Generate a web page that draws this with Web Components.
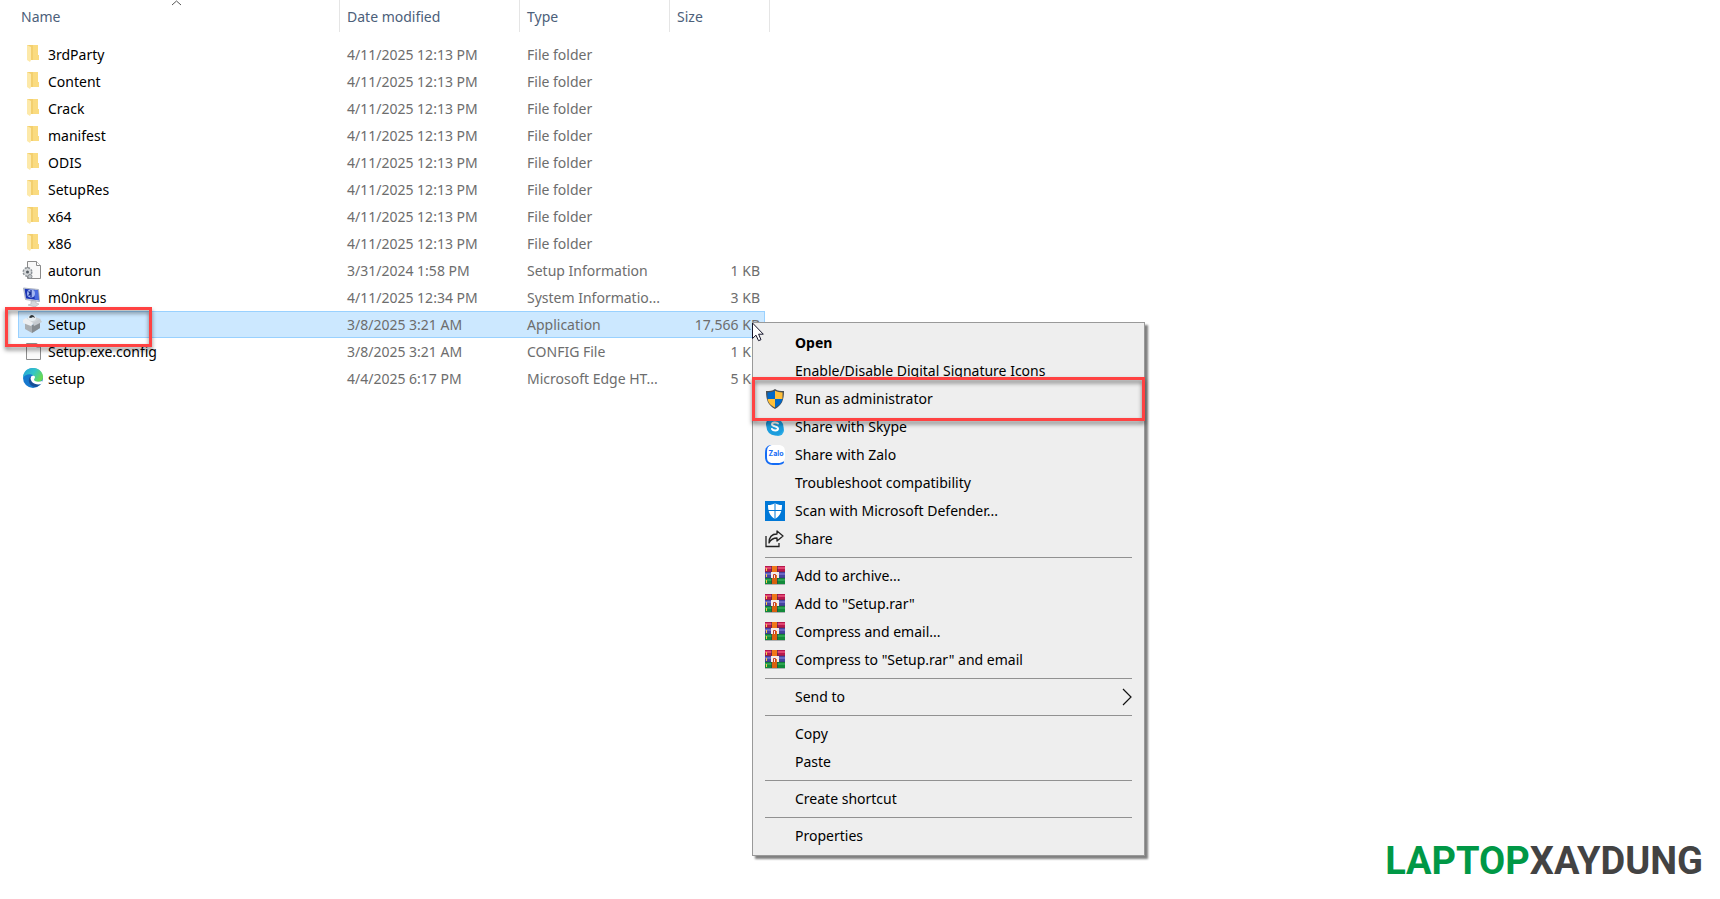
<!DOCTYPE html>
<html lang="en">
<head>
<meta charset="utf-8">
<title>Setup files</title>
<style>
  html { background: #fff; }
  body { margin: 0; font: 14px/20px "Noto Sans", "Open Sans", sans-serif; color: #000; }
</style>
</head>
<body>
<explorer-window>
  <file-list></file-list>
  <mark-box slot="overlay"></mark-box>
  <context-menu slot="overlay">
    <menu-item bold>Open</menu-item>
    <menu-item>Enable/Disable Digital Signature Icons</menu-item>
    <menu-item icon="uac" marked>Run as administrator</menu-item>
    <menu-item icon="skype">Share with Skype</menu-item>
    <menu-item icon="zalo">Share with Zalo</menu-item>
    <menu-item>Troubleshoot compatibility</menu-item>
    <menu-item icon="defender">Scan with Microsoft Defender...</menu-item>
    <menu-item icon="share">Share</menu-item>
    <menu-line></menu-line>
    <menu-item icon="rar">Add to archive...</menu-item>
    <menu-item icon="rar">Add to "Setup.rar"</menu-item>
    <menu-item icon="rar">Compress and email...</menu-item>
    <menu-item icon="rar">Compress to "Setup.rar" and email</menu-item>
    <menu-line></menu-line>
    <menu-item submenu>Send to</menu-item>
    <menu-line></menu-line>
    <menu-item>Copy</menu-item>
    <menu-item>Paste</menu-item>
    <menu-line></menu-line>
    <menu-item>Create shortcut</menu-item>
    <menu-line></menu-line>
    <menu-item>Properties</menu-item>
  </context-menu>
  <mouse-cursor slot="overlay"></mouse-cursor>
  <brand-logo slot="footer"><span slot="first">LAPTOP</span><span slot="second">XAYDUNG</span></brand-logo>
</explorer-window>

<script>
const ICONS = {
  folder: `<path d="M5 1h11v10h1v5H5z" fill="#f3cf6e"/><path d="M11 1h5v10h1v5h-6z" fill="#fadb80"/><path d="M5 1l4 2v13l-1 2-3-2z" fill="#fde9a9"/>`,
  inf: `<path d="M5.500 1.500h9l4 4v13h-13z" fill="#f8f8f8" stroke="#8a8a8a"/><path d="M14.500 1.500v4h4" fill="#fff" stroke="#8a8a8a"/><circle cx="5.500" cy="12" r="4" fill="#d5d8da" stroke="#8b9196" stroke-width="2" stroke-dasharray="2 1.140"/><circle cx="5.500" cy="12" r="3.500" fill="#d5d8da"/><circle cx="5.500" cy="12" r="1.500" fill="#555c62"/><circle cx="8" cy="16.500" r="2" fill="#c3c7ca" stroke="#8a8f93"/>`,
  system: `<path d="M1.500 1l15 1.500 1 12-14-2z" fill="#dfe4ea" stroke="#aab1bf"/><path d="M2.500 1.800l13.500 1.400.8 10L4 11.500z" fill="#1b35b5"/><path d="M12 2.800l4 .4.8 10-4-.6z" fill="#4a6ce0"/><ellipse cx="9" cy="6.500" rx="4" ry="4" fill="#a4b8f2"/><path d="M9 3v7M6.500 4.500c2 1 2 3 0 4" stroke="#172e91" fill="none" stroke-width="1.300"/><path d="M9 14h5v2l3 1-4 3-7-2 3-1z" fill="#d5d8dc" stroke="#aeb3b8" stroke-width=".6"/>`,
  setup: `<path d="M3 8l8 4 7-4v6l-8 5-7-4z" fill="#a9aeb2"/><path d="M10 11l8-4v7l-8 5z" fill="#868c91"/><path d="M3 6l7-4 9 3-8 5z" fill="#cfd4d8"/><path d="M1 6l3-2 7 5-2 3-8-3z" fill="#eceef0"/><path d="M11 9l7-4 2 3-8 4z" fill="#c6cbd0"/><ellipse cx="10" cy="4" rx="4" ry="3" fill="#e8eef2"/><path d="M7 3.500C8 0 12 0 13 4l-2-1-2 1z" fill="#333b40"/>`,
  config: `<path d="M4.500 2.500h10l4 3v13h-14z" fill="#fafafa" stroke="#8d8d8d"/><path d="M14.500 2.500v3.500h4" fill="none" stroke="#8d8d8d"/>`,
  edge: `<defs><linearGradient id="g" x1="0" y1="0" x2="1" y2=".5"><stop stop-color="#249fd9"/><stop offset=".55" stop-color="#32c5c8"/><stop offset="1" stop-color="#68da55"/></linearGradient></defs><circle cx="11" cy="10" r="10" fill="#1678ce"/><path d="M1 10C1 4 5 0 11 0s10 4 10 9c0 4-3 5-6 5-4 0-4-2-3-4 1-4-8-6-11 0z" fill="url(#g)"/><path d="M8 9c-3 4 0 10 6 10 3-1 5-3 5-4-6 2-10 0-9-6z" fill="#154f98"/><path d="M9 9c1-2 4-1 4 0 0 1-1 2-1 3 1 2 5 2 8 1l1 1-2 2c-3 1-7 0-9-2-1-2-2-3-1-5z" fill="#fff"/>`,
  uac: `<path d="M10 0c3 2 5 2 9 2 0 9-2 14-9 18C3 16 1 11 1 2c4 0 6 0 9-2z" fill="#4b5054"/><path d="M10 1.800V10H2.600L2.400 3.400c3 0 5-.2 7.600-1.600z" fill="#0068c8"/><path d="M10 1.800V10h7.400l.2-6.600c-3 0-5-.2-7.600-1.600z" fill="#ffbf38"/><path d="M2.600 10H10v8.400c-4.500-2-6.600-4.400-7.400-8.400z" fill="#ffbf38"/><path d="M17.400 10H10v8.400c4.500-2 6.600-4.400 7.400-8.400z" fill="#0068c8"/>`,
  skype: `<circle cx="7" cy="7" r="6" fill="#1789cf"/><circle cx="13" cy="13" r="6" fill="#29a9e5"/><circle cx="10" cy="10" r="8.500" fill="#1c9ddd"/><path d="M13 6.500c-1-1.500-6-1.700-6 .8s6 1.700 6 4.300-5 2.300-6 .4" fill="none" stroke="#fff" stroke-width="2" stroke-linecap="round"/>`,
  zalo: `<path d="M7 0C2 0 0 3 0 8v4c0 5 3 8 8 8h4c4 0 7-1 7-3z" fill="#146cf5"/><path d="M8 0h5c5 0 7 2 7 7v4c0 5-2 7-7 7H9c-2 0-4 0-5-1-2-1-2-4-2-6V7c0-5 2-7 6-7z" fill="#fff"/><text x="11" y="11" font-size="7" font-weight="700" text-anchor="middle" fill="#146cf5">Zalo</text>`,
  defender: `<path fill="#0078d7" d="M0 0h20v20H0z"/><path d="M10 2c2 1.500 4 2 7 2 0 7-2 11-7 14C5 15 3 11 3 4c3 0 5-.5 7-2z" fill="#fff"/><path d="M10 2v16M3 9.500h14" stroke="#0078d7"/>`,
  share: `<path d="M1 7v10.500h13V14" fill="none" stroke="#222" stroke-width="1.300"/><path d="M12 2l6 5-6 5V9c-4 0-6 1-8 5 0-6 3-9 8-9z" fill="none" stroke="#222" stroke-width="1.300" stroke-linejoin="round"/>`,
  rar: `<path fill="#aeb1b3" d="M0 18h20v1H0z"/><path fill="#b8184c" d="M0 0h20v6H0z"/><path fill="#e04572" d="M0 1h20v2H0z"/><path fill="#4444a0" d="M0 6h20v6H0z"/><path fill="#6a68c4" d="M0 7h20v2H0z"/><path fill="#128a3a" d="M0 12h20v6H0z"/><path fill="#2da350" d="M0 13h20v2H0z"/><path fill="#253046" opacity=".5" d="M0 5.500h20v.6H0zM0 11.600h20v.6H0zM6 0h1v18H6zM12 0h1v18h-1z"/><path fill="#f07818" d="M7 0h5v12H7z"/><path fill="#d9600f" d="M7 12h5v6H7z"/><path fill="#f4ece8" d="M6 6h8v6h-2V9h-1v3H9V9H8v3H6z"/><path d="M8.500 12V8.500h2V12" fill="none" stroke="#c43b22"/><path d="M1.500 2v3M1.500 8v3M1.500 14v3" stroke="#f7c94a"/>`
};

class AppIcon extends HTMLElement {
  connectedCallback() {
    const root = this.attachShadow({ mode: "open" });
    root.innerHTML = `<style>
      :host { display: block; flex: none; width: var(--icon-width, 20px); height: 20px; font-family: Inter, sans-serif; }
      svg { display: block; width: 100%; height: 20px; }
    </style><svg viewBox="0 0 ${this.getAttribute("span") || 20} 20" aria-hidden="true">${ICONS[this.getAttribute("name")] || ""}</svg>`;
  }
}

class ExplorerWindow extends HTMLElement {
  constructor() {
    super();
    this.attachShadow({ mode: "open" }).innerHTML = `<style>
      :host { display: flex; flex-direction: column; position: relative; min-height: 100vh; }
      footer { margin-top: auto; align-self: flex-end; padding: 0 17px 16px 0; }
    </style>
    <main><slot></slot></main><slot name="overlay"></slot><footer><slot name="footer"></slot></footer>`;
  }
}

const FILES = [
  ...["3rdParty", "Content", "Crack", "manifest", "ODIS", "SetupRes", "x64", "x86"]
    .map(name => ["folder", name, "4/11/2025 12:13 PM", "File folder", ""]),
  ["inf", "autorun", "3/31/2024 1:58 PM", "Setup Information", "1 KB"],
  ["system", "m0nkrus", "4/11/2025 12:34 PM", "System Informatio...", "3 KB"],
  ["setup", "Setup", "3/8/2025 3:21 AM", "Application", "17,566 KB"],
  ["config", "Setup.exe.config", "3/8/2025 3:21 AM", "CONFIG File", "1 KB"],
  ["edge", "setup", "4/4/2025 6:17 PM", "Microsoft Edge HT...", "5 KB"]
];

class FileList extends HTMLElement {
  constructor() {
    super();
    const rows = FILES.map(([icon, name, date, type, size]) => `
      <tr class="${name === "Setup" ? "selected" : ""}">
        <td><div class="name"><app-icon name="${icon}" span="24"></app-icon><span>${name}</span></div></td>
        <td>${date}</td><td>${type}</td><td class="size">${size}</td><td class="edge"></td>
      </tr>`).join("");
    this.attachShadow({ mode: "open" }).innerHTML = `<style>
      :host { display: block; padding-left: 18px; }
      table { table-layout: fixed; width: 752px; border-collapse: separate; border-spacing: 0; color: #6d6d6d; }
      th, td { padding: 0 0 0 7px; text-align: left; font-weight: 400; white-space: nowrap; }
      th { box-sizing: border-box; position: relative; height: 32px; padding-top: 2px; color: #4c607a; border-right: 1px solid #e5e5e5; }
      th:first-child { padding-left: 3px; }
      th svg { position: absolute; top: 0; left: 153px; }
      thead::after { content: ""; display: block; height: 9px; }
      td { box-sizing: border-box; height: 27px; }
      td:first-child { padding-left: 4px; color: #000; }
      .name { display: flex; align-items: flex-end; gap: 2px; height: 21px; --icon-width: 24px; }
      .name app-icon { align-self: flex-start; }
      .size { text-align: right; padding-right: 5px; }
      .edge { padding: 0; }
      .selected td:not(.edge) { background: #cce8ff; border: solid #99d1ff; border-width: 1px 0; }
      .selected td:first-child { border-left-width: 1px; padding-left: 3px; }
      .selected td.size { border-right-width: 1px; padding-right: 4px; }
    </style>
    <table>
      <colgroup><col style="width:322px"><col style="width:180px"><col style="width:150px"><col style="width:95px"><col style="width:5px"></colgroup>
      <thead><tr><th scope="col">Name<svg width="11" height="6" viewBox="0 0 11 6" aria-hidden="true"><path d="M1 5l4.500-4L10 5" fill="none" stroke="#555"/></svg></th><th scope="col">Date modified</th><th scope="col">Type</th><th scope="col" colspan="2">Size</th></tr></thead>
      <tbody>${rows}</tbody>
    </table>`;
  }
}

class ContextMenu extends HTMLElement {
  constructor() {
    super();
    this.attachShadow({ mode: "open" }).innerHTML = `<style>
      :host { position: absolute; left: 752px; top: 322px; box-sizing: border-box; width: 393px; padding: 6px 0 5px; background: #eee; border: 1px solid #999; box-shadow: 3px 3px 2px #808080; }
    </style><div role="menu"><slot></slot></div>`;
  }
}

class MenuItem extends HTMLElement {
  connectedCallback() {
    this.attachShadow({ mode: "open" }).innerHTML = `<style>
      :host { display: block; position: relative; }
      button { display: flex; align-items: center; gap: 10px; width: 100%; height: 28px; margin: 0; padding: 0 12px; border: 0; background: none; font: inherit; color: inherit; text-align: left; }
      :host([bold]) button { font-weight: 700; }
      .label { flex: 1; }
      :host([marked]) { z-index: 1; }
      mark-box { inset: -8px -1px; width: auto; height: auto; }
    </style>
    <button type="button" role="menuitem"><app-icon name="${this.getAttribute("icon") || ""}"></app-icon><span class="label"><slot></slot></span>${
      this.hasAttribute("submenu") ? `<svg width="10" height="18" viewBox="0 0 10 18" aria-hidden="true"><path d="M1 1l8 8-8 8" fill="none" stroke="#111" stroke-width="1.200"/></svg>` : ""
    }</button>${this.hasAttribute("marked") ? "<mark-box></mark-box>" : ""}`;
  }
}

class MenuLine extends HTMLElement {
  constructor() {
    super();
    this.attachShadow({ mode: "open" }).innerHTML = `<style>
      :host { display: block; padding: 4px 12px; }
      hr { margin: 0; border: 0; height: 1px; background: #919191; }
    </style><hr>`;
  }
}

class MarkBox extends HTMLElement {
  constructor() {
    super();
    this.attachShadow({ mode: "open" }).innerHTML = `<style>
      :host { position: absolute; left: 5px; top: 307px; width: 147px; height: 40px; box-sizing: border-box; border: 3px solid #ff4242; pointer-events: none; filter: drop-shadow(0 3px 2px rgba(0,0,0,.5)); }
    </style>`;
  }
}

class MouseCursor extends HTMLElement {
  constructor() {
    super();
    this.attachShadow({ mode: "open" }).innerHTML = `<style>
      :host { position: absolute; left: 752px; top: 322px; }
      svg { display: block; }
    </style><svg width="13" height="20" viewBox="0 0 13 20" aria-hidden="true"><path d="M.5 1v15.500l3.500-3.300 2.500 5.500 2.500-1-2.400-5.500h4.700z" fill="#fff" stroke="#15152a"/></svg>`;
  }
}

class BrandLogo extends HTMLElement {
  constructor() {
    super();
    this.attachShadow({ mode: "open" }).innerHTML = `<style>
      :host { display: flex; font: 700 38px/44px Roboto, sans-serif; }
      .first { color: #009846; }
      .second { color: #434343; }
    </style><span class="first"><slot name="first"></slot></span><span class="second"><slot name="second"></slot></span>`;
  }
}

customElements.define("app-icon", AppIcon);
customElements.define("mark-box", MarkBox);
customElements.define("menu-item", MenuItem);
customElements.define("menu-line", MenuLine);
customElements.define("context-menu", ContextMenu);
customElements.define("file-list", FileList);
customElements.define("mouse-cursor", MouseCursor);
customElements.define("brand-logo", BrandLogo);
customElements.define("explorer-window", ExplorerWindow);
</script>
</body>
</html>
